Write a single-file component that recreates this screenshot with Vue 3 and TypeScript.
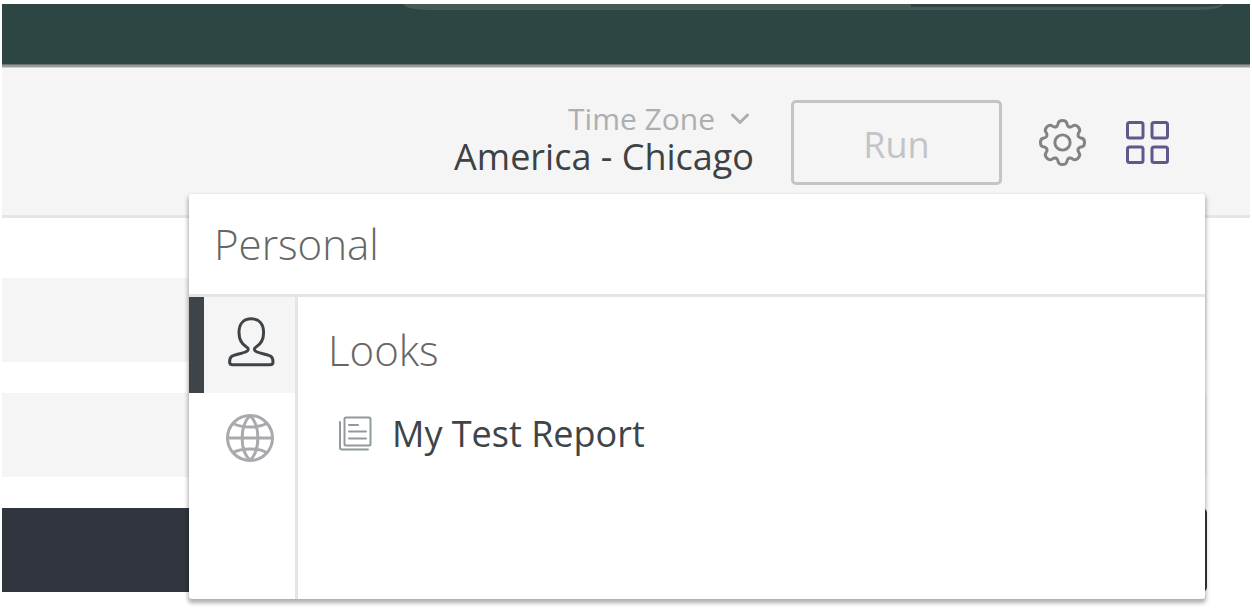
<script setup lang="ts">
import { ref } from 'vue'

type Space = 'personal' | 'shared'

const timeZone = ref('America - Chicago')
const activeSpace = ref<Space>('personal')
const looks: { id: number; title: string }[] = [{ id: 1, title: 'My Test Report' }]
</script>

<template>
  <div class="page">
    <div class="topbar">
      <div class="search"><div class="search-field"></div></div>
    </div>

    <header class="toolbar">
      <button class="timezone" type="button">
        <span class="timezone-label">
          Time Zone
          <svg class="chevron" viewBox="0 0 20 14" aria-hidden="true">
            <path d="M2.500 3 L10 10.500 L17.500 3" />
          </svg>
        </span>
        <span class="timezone-value">{{ timeZone }}</span>
      </button>
      <button class="run" type="button" disabled>Run</button>
      <button class="icon-button gear" type="button" aria-label="Settings">
        <svg viewBox="0 0 50 50" aria-hidden="true">
          <path
            v-for="n in 8"
            :key="n"
            :transform="`rotate(${n * 45} 25 25)`"
            d="M18.400 9 C20.200 8.300 20.200 7 20.400 6 C21 1.300 29 1.300 29.600 6 C29.800 7 29.800 8.300 31.600 9"
          />
          <circle cx="25" cy="25" r="7.800" />
        </svg>
      </button>
      <button class="icon-button tiles" type="button" aria-label="Browse spaces" aria-expanded="true">
        <svg viewBox="0 0 43 43" aria-hidden="true">
          <rect x="1.500" y="1.500" width="15.500" height="15.500" rx="2" />
          <rect x="26" y="1.500" width="15.500" height="15.500" rx="2" />
          <rect x="1.500" y="26" width="15.500" height="15.500" rx="2" />
          <rect x="26" y="26" width="15.500" height="15.500" rx="2" />
        </svg>
      </button>

      <section class="menu" aria-labelledby="menu-title">
        <h2 id="menu-title" class="menu-title">Personal</h2>
        <div class="menu-body">
          <nav class="rail" aria-label="Spaces">
            <button
              type="button"
              class="rail-item"
              :class="{ active: activeSpace === 'personal' }"
              aria-label="Personal"
              @click="activeSpace = 'personal'"
            >
              <svg viewBox="0 0 50 50" aria-hidden="true">
                <path
                  d="M21.500 34.500 C23.800 33.300 23.800 31.300 21.500 30 C16.500 27 14 21.500 14 15.500 C14 7 18.500 1.800 26.300 1.800 C34.100 1.800 38.600 7 38.600 15.500 C38.600 21.500 36.100 27 31.100 30 C28.800 31.300 28.800 33.300 31.100 34.500 C34.500 36.500 42.500 37 45.800 39.300 C47.600 40.600 48 43 48 45 C48 47 47 47.800 45 47.800 H7.600 C5.600 47.800 4.600 47 4.600 45 C4.600 43 5 40.600 6.800 39.300 C10.100 37 18.100 36.500 21.500 34.500 Z"
                />
              </svg>
            </button>
            <button
              type="button"
              class="rail-item"
              :class="{ active: activeSpace === 'shared' }"
              aria-label="Shared"
              @click="activeSpace = 'shared'"
            >
              <svg viewBox="0 0 50 50" aria-hidden="true">
                <circle cx="25" cy="25" r="22.500" />
                <path
                  d="M2.500 25 H47.500 M25 2.500 C14.500 13 14.500 37 25 47.500 M25 2.500 C35.500 13 35.500 37 25 47.500 M8 10.500 C17 15.200 33 15.200 42 10.500 M8 39.500 C17 34.800 33 34.800 42 39.500"
                />
              </svg>
            </button>
          </nav>
          <div class="content">
            <h3 class="group-title">Looks</h3>
            <ul class="looks">
              <li v-for="look in looks" :key="look.id">
                <a class="look" href="#">
                  <svg viewBox="0 0 34 36" aria-hidden="true">
                    <rect x="6.500" y="1.500" width="26" height="28" rx="1.500" />
                    <path d="M2 6 V31.500 Q2 33.500 4 33.500 H30" />
                    <path d="M11 9 H20 M11 15.500 H28 M11 22.500 H28" />
                  </svg>
                  <span>{{ look.title }}</span>
                </a>
              </li>
            </ul>
          </div>
        </div>
      </section>
    </header>

    <main class="panels">
      <div class="panel"></div>
      <div class="panel"></div>
      <div class="panel dark"></div>
    </main>
  </div>
</template>

<style>
body {
  margin: 0;
  background: #fff;
}
</style>

<style scoped>
.page {
  box-sizing: border-box;
  min-height: 100vh;
  padding: 4px 2px 16px;
  font-family: 'Open Sans', 'Noto Sans', sans-serif;
  color: #3d4244;
}

button {
  margin: 0;
  padding: 0;
  border: 0;
  background: none;
  font: inherit;
  color: inherit;
  cursor: pointer;
}

svg {
  display: block;
  fill: none;
  stroke: currentColor;
  stroke-linecap: round;
  stroke-linejoin: round;
}

.topbar {
  height: 61px;
  padding: 0 27px 0 402px;
  background: #2e4643;
  border-bottom: 2px solid #9a9898;
  box-shadow: inset 0 -1px #667370;
}

.search {
  box-sizing: border-box;
  height: 6px;
  padding: 0 2px 3px 0;
  background: #455b57;
  border-radius: 0 0 24px 24px / 0 0 6px 6px;
}

.search-field {
  width: 38%;
  height: 3px;
  margin-left: auto;
  background: #2e4643;
  border-radius: 0 0 20px 0 / 0 0 3px 0;
}

.toolbar {
  position: relative;
  display: flex;
  align-items: flex-start;
  justify-content: flex-end;
  height: 115px;
  padding: 32px 81px 0 0;
  background: #f5f5f5;
  border-top: 1px solid #cfcfcf;
  border-bottom: 3px solid #e5e5e5;
}

.timezone {
  display: flex;
  flex-direction: column;
  align-items: flex-end;
  margin-right: 37px;
}

.timezone-label {
  display: flex;
  align-items: center;
  gap: 15px;
  padding-right: 4px;
  font-size: 30px;
  line-height: 38px;
  color: #adaeb1;
}

.chevron {
  width: 20px;
  height: 14px;
  stroke-width: 3;
}

.timezone-value {
  font-size: 36px;
  line-height: 38px;
}

.run {
  box-sizing: border-box;
  width: 211px;
  height: 85px;
  margin-right: 36px;
  padding-top: 3px;
  border: 3px solid #c3c4c6;
  border-radius: 5px;
  font-size: 36px;
  color: #c3c4c6;
}

.gear {
  margin: 18px 39px 0 0;
  color: #878282;
}

.gear svg {
  width: 49px;
  height: 49px;
  stroke-width: 3;
}

.tiles {
  margin-top: 21px;
  color: #62578c;
}

.tiles svg {
  width: 43px;
  height: 43px;
  stroke-width: 3;
}

.menu {
  position: absolute;
  z-index: 1;
  top: 126px;
  left: 187px;
  right: 45px;
  background: #fff;
  border-radius: 3px;
  box-shadow: 0 3px 4px 1px rgba(0, 0, 0, 0.32);
}

.menu-title,
.group-title {
  margin: 0;
  font-size: 42px;
  font-weight: 300;
  color: #666;
}

.menu-title {
  padding: 0 25px;
  line-height: 100px;
  border-bottom: 3px solid #e4e6e6;
}

.menu-body {
  display: flex;
  min-height: 302px;
}

.rail {
  display: flex;
  flex-direction: column;
  width: 106px;
  border-right: 3px solid #e4e6e6;
}

.rail-item {
  display: flex;
  align-items: center;
  height: 96px;
  padding: 0 0 6px 21px;
  border-left: 15px solid transparent;
  color: #a9aaad;
}

.rail-item.active {
  border-color: #3e4447;
  background: #f5f5f5;
  color: #3e4447;
}

.rail-item svg {
  width: 50px;
  height: 50px;
  stroke-width: 3;
}

.content {
  flex: 1;
  padding: 23px 30px;
}

.group-title {
  line-height: 60px;
}

.looks {
  margin: 0;
  padding: 29px 0 0 10px;
  list-style: none;
}

.look {
  display: flex;
  align-items: center;
  gap: 20px;
  font-size: 36px;
  line-height: 50px;
  color: #3e4447;
  text-decoration: none;
}

.look svg {
  width: 34px;
  height: 36px;
  stroke-width: 2;
  color: #8f9a9d;
}

.panels {
  display: flex;
  flex-direction: column;
  gap: 31px;
  padding: 60px 43px 0 0;
}

.panel {
  height: 84px;
  background: #f5f5f5;
  border-radius: 0 5px 5px 0;
}

.panel.dark {
  background: #31353e;
}
</style>
